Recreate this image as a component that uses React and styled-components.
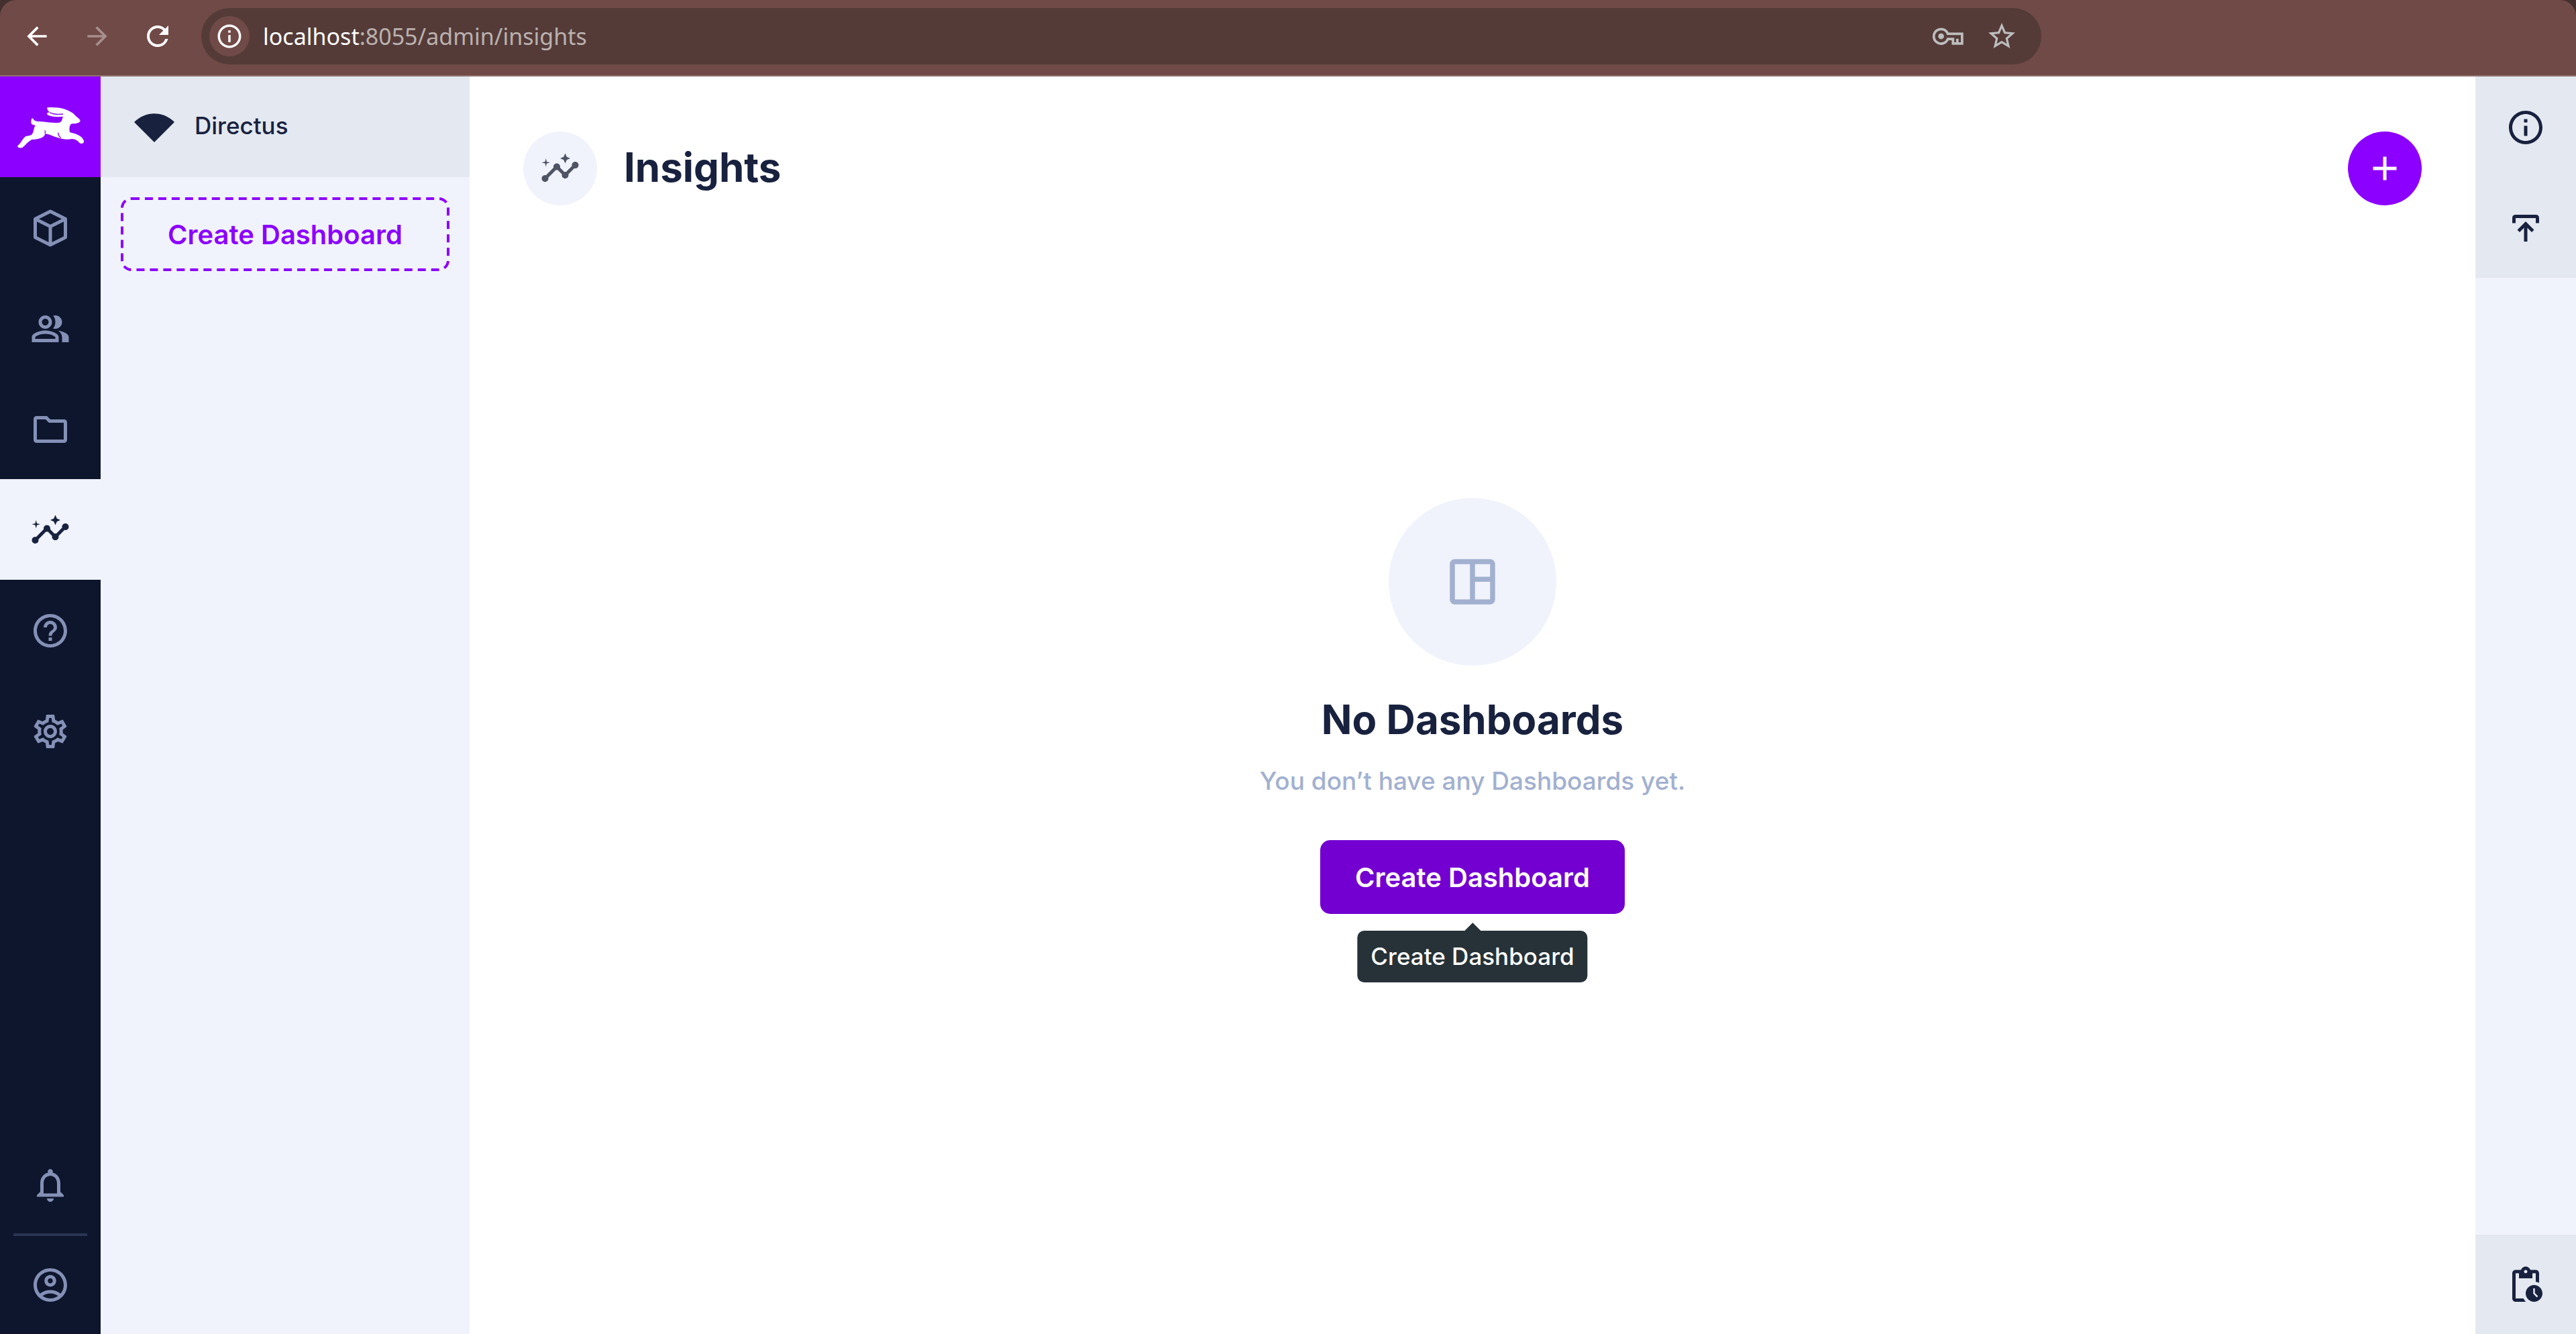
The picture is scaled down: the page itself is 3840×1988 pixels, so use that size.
import React from "react";
import styled, { createGlobalStyle } from "styled-components";
import {
  MdArrowBack, MdArrowForward, MdRefresh, MdInfoOutline, MdStarBorder, MdOutlinePeopleAlt,
  MdInsights, MdHelpOutline, MdOutlineSettings, MdNotificationsNone,
  MdAdd, MdPendingActions, MdOutlineSpaceDashboard, MdOutlineAccountCircle
} from "react-icons/md";

const color = {
  chrome: "#704a46", chromeLine: "#8f706d", field: "#543b38",
  purple: "#8c00ff", purpleDark: "#7300d1", navy: "#0e162d", navIcon: "#8490b5",
  ink: "#18223f", panel: "#f0f3fb", panelAccent: "#e4e8f0", subdued: "#a2b0d0", tooltip: "#263238"
};

const GlobalStyle = createGlobalStyle`
  *, *::before, *::after { box-sizing: border-box; }
  body { margin: 0; background: #fff; color: ${color.ink}; font-family: Inter, "Liberation Sans", sans-serif; }
  button { font: inherit; border: 0; padding: 0; background: none; color: inherit; cursor: pointer; }
  h1, h2, p { margin: 0; }
  svg { display: block; flex: none; }
`;

const Page = styled.div`
  display: flex;
  flex-direction: column;
  min-height: 100vh;
`;

const BrowserCorners = styled.div`
  background: #43302f;
`;

const BrowserBar = styled.header`
  display: flex;
  align-items: center;
  height: 114px;
  padding: 0 0 4px 30px;
  background: ${color.chrome};
  border-bottom: 2px solid ${color.chromeLine};
  border-radius: 24px 24px 0 0;
  color: #fff;
`;

const BrowserButtons = styled.nav`
  display: flex;
  gap: 40px;
  width: 270px;
`;

const BrowserButton = styled.button`
  display: grid;
  place-items: center;
  width: 50px;
  height: 50px;
  &:disabled { color: #a68f8c; cursor: default; }
`;

const AddressField = styled.form`
  display: flex;
  align-items: center;
  width: 2744px;
  max-width: 72%;
  height: 84px;
  padding: 0 34px 0 12px;
  border-radius: 42px;
  background: ${color.field};
`;

const SiteInfo = styled.button`
  display: grid;
  place-items: center;
  width: 60px;
  height: 60px;
  border-radius: 50%;
  background: ${color.chrome};
`;

const Address = styled.a`
  flex: 1;
  margin-left: 20px;
  font-family: "Noto Sans", "Open Sans", sans-serif;
  font-size: 34px;
  line-height: 48px;
  color: #bbb1af;
  text-decoration: none;
`;

const Host = styled.span`
  color: #fff;
`;

const FieldActions = styled.div`
  display: flex;
  gap: 30px;
  color: #bdbdbd;
`;

const Workspace = styled.div`
  display: flex;
  flex: 1;
`;

const ModuleBar = styled.nav`
  display: flex;
  flex-direction: column;
  width: 150px;
  background: ${color.navy};
  color: ${color.navIcon};
`;

const ModuleLink = styled.a`
  display: grid;
  place-items: center;
  height: 150px;
  padding-top: 2px;
  color: ${p => (p.$active ? color.ink : "inherit")};
  background: ${p => (p.$active ? color.panel : "transparent")};
`;

const LogoLink = styled(ModuleLink)`
  background: ${color.purple};
  color: #fff;
`;

const ModuleFooter = styled.div`
  margin-top: auto;
`;

const Divider = styled.hr`
  width: 110px;
  height: 4px;
  margin: -2px auto;
  border: 0;
  background: #2b3553;
`;

const AccountLink = styled(ModuleLink)`
  height: 148px;
`;

const SidePanel = styled.aside`
  width: 550px;
  background: ${color.panel};
`;

const ProjectHeader = styled.div`
  display: flex;
  align-items: center;
  gap: 30px;
  height: 150px;
  padding: 0 50px 4px;
  background: ${color.panelAccent};
  font-size: 35px;
  font-weight: 500;
`;

const SideContent = styled.div`
  padding: 30px;
`;

const ActionButton = styled.button`
  display: flex;
  align-items: center;
  justify-content: center;
  height: 110px;
  border-radius: 15px;
  font-size: 40px;
  font-weight: 600;
`;

const DashedButton = styled(ActionButton)`
  position: relative;
  width: 100%;
  color: ${color.purple};
  &::before {
    content: "";
    position: absolute;
    top: 0;
    left: 0;
    width: 50%;
    height: 50%;
    border: 2px dashed ${color.purple};
    border-radius: 8px;
    transform: scale(2);
    transform-origin: 0 0;
  }
`;

const SolidButton = styled(ActionButton)`
  padding: 0 52px;
  background: ${color.purpleDark};
  color: #fff;
`;

const Main = styled.main`
  display: flex;
  flex: 1;
  flex-direction: column;
`;

const TitleBar = styled.header`
  display: flex;
  align-items: center;
  gap: 40px;
  padding: 82px 80px 0;
`;

const TitleIcon = styled.span`
  display: grid;
  place-items: center;
  width: 110px;
  height: 110px;
  border-radius: 50%;
  background: ${color.panel};
  color: #4f5464;
`;

const Heading = styled.h1`
  flex: 1;
  padding-bottom: 4px;
  font-size: 60px;
  font-weight: 700;
  line-height: 80px;
`;

const RoundButton = styled.button`
  display: grid;
  place-items: center;
  width: 110px;
  height: 110px;
  border-radius: 50%;
  background: ${color.purple};
  color: #fff;
`;

const EmptyState = styled.section`
  display: flex;
  flex: 1;
  flex-direction: column;
  align-items: center;
  justify-content: center;
  padding-bottom: 190px;
`;

const EmptyIcon = styled.span`
  display: grid;
  place-items: center;
  width: 250px;
  height: 250px;
  border-radius: 50%;
  background: ${color.panel};
  color: ${color.subdued};
`;

const EmptyTitle = styled.h2`
  margin-top: 40px;
  font-size: 60px;
  font-weight: 700;
  line-height: 80px;
`;

const EmptyText = styled.p`
  margin: 22px 0 58px;
  font-size: 37px;
  font-weight: 500;
  line-height: 60px;
  color: ${color.subdued};
`;

const TooltipAnchor = styled.div`
  position: relative;
`;

const Tooltip = styled.span`
  position: absolute;
  top: calc(100% + 25px);
  left: 50%;
  transform: translateX(-50%);
  padding: 0 20px;
  border-radius: 10px;
  background: ${color.tooltip};
  color: #fff;
  font-size: 35px;
  font-weight: 500;
  line-height: 77px;
  white-space: nowrap;
  &::before {
    content: "";
    position: absolute;
    bottom: 100%;
    left: 50%;
    margin-left: -12px;
    border: 12px solid transparent;
    border-top-width: 0;
    border-bottom-color: ${color.tooltip};
  }
`;

const DetailBar = styled.aside`
  display: flex;
  flex-direction: column;
  width: 150px;
  background: ${color.panel};
`;

const DetailButton = styled.button`
  display: grid;
  place-items: center;
  width: 100%;
  height: 150px;
  padding-top: 2px;
  background: ${color.panelAccent};
  ${p => p.$last && "margin-top: auto; height: 148px;"}
`;

const RabbitLogo = () => (
  <svg width="101" height="62" viewBox="15 26 303 186" fill="currentColor" aria-hidden="true">
    <path d="M151 30C180 28 205 30 226 36C248 43 268 54 279 68C288 75 297 82 299 88C297 98 283 102 262 102C252 105 248 122 252 140C278 147 302 154 312 172C322 186 308 196 296 188C286 177 278 171 262 170C240 175 216 171 200 165C178 160 164 149 142 147C138 164 118 172 82 173C66 181 56 196 40 209C28 213 14 208 20 199C36 188 40 167 56 158C68 156 80 154 84 148C92 135 90 122 98 109C84 109 76 101 80 91C78 83 84 74 88 79C92 88 100 92 118 92C150 94 180 101 206 97C218 93 217 80 222 70C198 73 170 72 152 62C148 54 154 50 162 52C156 44 149 38 151 30Z" />
    <path d="M162 52C180 61 198 62 222 59M141 132Q144 140 141 147M201 142C198 154 206 160 212 166" fill="none" stroke="#8c00ff" strokeWidth="4" />
  </svg>
);

const FanIcon = () => (
  <svg width="60" height="52" viewBox="0 -8 60 52" fill="currentColor" aria-hidden="true">
    <path d="M0 13C17-4 43-4 60 13L30 43Z" />
  </svg>
);

const CubeIcon = () => (
  <svg width="60" height="60" viewBox="0 0 24 24" fill="none" stroke="currentColor" strokeWidth="2" strokeLinejoin="round" aria-hidden="true">
    <path d="M12 2 21 6.5V17.5L12 22 3 17.5V6.5ZM3 6.5 12 11 21 6.5M12 11V22" />
  </svg>
);

const FolderIcon = () => (
  <svg width="60" height="60" viewBox="0 0 24 24" fill="currentColor" fillRule="evenodd" aria-hidden="true">
    <path d="M4 20Q2 20 2 18V6Q2 4 4 4H10L12 6H20Q22 6 22 8V18Q22 20 20 20ZM4 18H20V8H11.2L9.2 6H4Z" />
  </svg>
);

const PublishIcon = () => (
  <svg width="60" height="60" viewBox="0 0 24 24" fill="currentColor" aria-hidden="true">
    <path d="M11 20V11.8L8.4 14.4 7 13 12 8 17 13 15.6 14.4 13 11.8V20ZM4 9V6Q4 4 6 4H18Q20 4 20 6V9H18V6H6V9Z" />
  </svg>
);

const KeyIcon = () => (
  <svg width="50" height="50" viewBox="0 0 24 24" fill="none" stroke="currentColor" strokeWidth="1.8" aria-hidden="true">
    <path d="M11.8 10.2H22V17.2H15.5V14H11.8A5.2 5.2 0 1 1 11.8 10.2ZM18.6 13.8V17.2" />
    <circle cx="7" cy="12" r="2.1" fill="currentColor" stroke="none" />
  </svg>
);

const modules = [
  { label: "Content", icon: <CubeIcon /> },
  { label: "User Directory", icon: <MdOutlinePeopleAlt size={60} /> },
  { label: "File Library", icon: <FolderIcon /> },
  { label: "Insights", icon: <MdInsights size={60} />, active: true },
  { label: "Help", icon: <MdHelpOutline size={60} /> },
  { label: "Settings", icon: <MdOutlineSettings size={60} /> }
];

export default function App() {
  return (
    <Page>
      <GlobalStyle />
      <BrowserCorners>
        <BrowserBar>
          <BrowserButtons aria-label="Browser">
            <BrowserButton aria-label="Back"><MdArrowBack size={44} /></BrowserButton>
            <BrowserButton aria-label="Forward" disabled><MdArrowForward size={44} /></BrowserButton>
            <BrowserButton aria-label="Reload"><MdRefresh size={48} /></BrowserButton>
          </BrowserButtons>
          <AddressField>
            <SiteInfo type="button" aria-label="Site information"><MdInfoOutline size={42} /></SiteInfo>
            <Address href="#insights"><Host>localhost</Host>:8055/admin/insights</Address>
            <FieldActions>
              <BrowserButton type="button" aria-label="Passwords"><KeyIcon /></BrowserButton>
              <BrowserButton type="button" aria-label="Bookmark"><MdStarBorder size={48} /></BrowserButton>
            </FieldActions>
          </AddressField>
        </BrowserBar>
      </BrowserCorners>
      <Workspace>
        <ModuleBar aria-label="Modules">
          <LogoLink href="#home" aria-label="Home"><RabbitLogo /></LogoLink>
          {modules.map(m => (
            <ModuleLink key={m.label} href="#module" aria-label={m.label} $active={m.active}>{m.icon}</ModuleLink>
          ))}
          <ModuleFooter>
            <ModuleLink href="#notifications" aria-label="Notifications"><MdNotificationsNone size={60} /></ModuleLink>
            <Divider />
            <AccountLink href="#account" aria-label="Account"><MdOutlineAccountCircle size={60} /></AccountLink>
          </ModuleFooter>
        </ModuleBar>
        <SidePanel>
          <ProjectHeader><FanIcon />Directus</ProjectHeader>
          <SideContent><DashedButton>Create Dashboard</DashedButton></SideContent>
        </SidePanel>
        <Main>
          <TitleBar>
            <TitleIcon><MdInsights size={60} /></TitleIcon>
            <Heading>Insights</Heading>
            <RoundButton aria-label="Add dashboard"><MdAdd size={60} /></RoundButton>
          </TitleBar>
          <EmptyState>
            <EmptyIcon><MdOutlineSpaceDashboard size={90} /></EmptyIcon>
            <EmptyTitle>No Dashboards</EmptyTitle>
            <EmptyText>You don’t have any Dashboards yet.</EmptyText>
            <TooltipAnchor>
              <SolidButton aria-describedby="create-tip">Create Dashboard</SolidButton>
              <Tooltip id="create-tip" role="tooltip">Create Dashboard</Tooltip>
            </TooltipAnchor>
          </EmptyState>
        </Main>
        <DetailBar>
          <DetailButton aria-label="Information"><MdInfoOutline size={60} /></DetailButton>
          <DetailButton aria-label="Import and export"><PublishIcon /></DetailButton>
          <DetailButton aria-label="Activity" $last><MdPendingActions size={60} /></DetailButton>
        </DetailBar>
      </Workspace>
    </Page>
  );
}
